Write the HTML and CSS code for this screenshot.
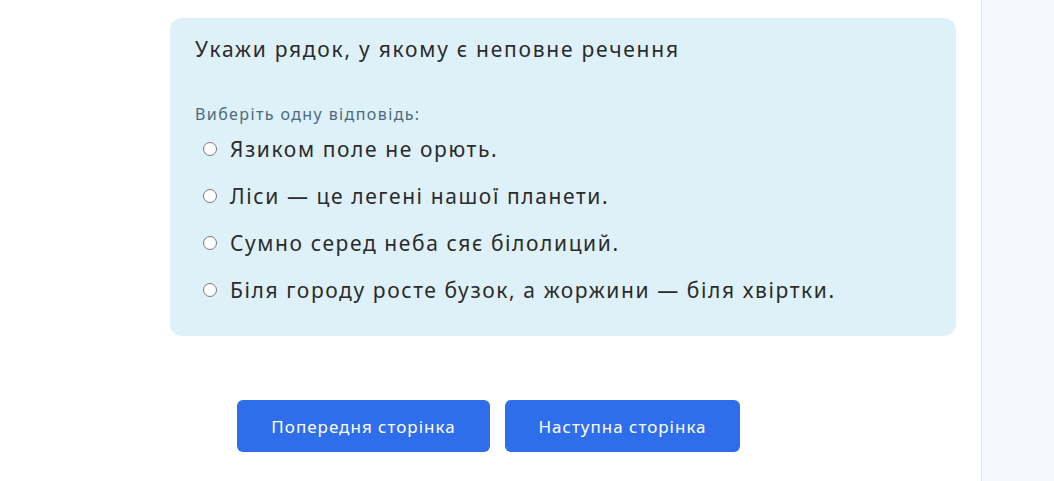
FILE: index.html
```html
<!DOCTYPE html>
<html lang="uk">
  <head>
    <meta charset="UTF-8" />
    <meta name="viewport" content="width=device-width, initial-scale=1.0" />
    <title>Тест</title>
    <link rel="stylesheet" href="styles.css">
  </head>
  <body>
    <div class="layout">
      <main class="content">
        <div class="question">
          <h2 class="question-text">Укажи рядок, у якому є неповне речення</h2>
          <p class="prompt">Виберіть одну відповідь:</p>
          <div class="answers">
            <label class="answer"><input type="radio" name="q1" /> Язиком поле не орють.</label>
            <label class="answer"><input type="radio" name="q1" /> Ліси — це легені нашої планети.</label>
            <label class="answer"><input type="radio" name="q1" /> Сумно серед неба сяє білолиций.</label>
            <label class="answer"><input type="radio" name="q1" /> Біля городу росте бузок, а жоржини — біля хвіртки.</label>
          </div>
        </div>
        <div class="nav">
          <button type="button" class="btn btn-prev">Попередня сторінка</button>
          <button type="button" class="btn btn-next">Наступна сторінка</button>
        </div>
      </main>
      <aside class="sidebar"></aside>
    </div>
  </body>
</html>
```
FILE: styles.css
```css
/* Reset styles */
*,
*::before,
*::after {
  margin: 0;
  padding: 0;
  box-sizing: border-box;
}

body {
  font-family: "Noto Sans", sans-serif;
  color: #2b2b2b;
  background-color: #fff;
  overflow: hidden;
}

.layout {
  display: flex;
  height: 481px;
}

.content {
  width: 981px;
  padding: 18px 25px 0 170px;
}

.sidebar {
  flex: 1;
  background-color: #f5f8fe;
  border-left: 1px solid #e6e8ec;
}

.question {
  background-color: #dff1f8;
  border-radius: 12px;
  padding: 19px 25px 23px;
}

.question-text {
  font-size: 21px;
  font-weight: 400;
  line-height: 24px;
  letter-spacing: 1.75px;
}

.prompt {
  margin-top: 43px;
  font-size: 16px;
  line-height: 20px;
  color: #4d6b7f;
  letter-spacing: 1.4px;
}

.answers {
  display: flex;
  flex-direction: column;
  margin-top: 1px;
}

.answer {
  display: flex;
  align-items: center;
  height: 47px;
  font-size: 21px;
  letter-spacing: 1.6px;
}

.answer input {
  width: 14px;
  height: 14px;
  margin: 0 13px 0 8px;
}

.nav {
  display: flex;
  gap: 15px;
  padding-left: 67px;
  margin-top: 64px;
}

.btn {
  height: 52px;
  font-family: "Noto Sans", sans-serif;
  font-size: 17px;
  font-weight: 400;
  letter-spacing: 1px;
  color: #fff;
  background-color: #2f6eea;
  border: none;
  border-radius: 6px;
  cursor: pointer;
}

.btn-prev {
  width: 253px;
}

.btn-next {
  width: 235px;
}
```
